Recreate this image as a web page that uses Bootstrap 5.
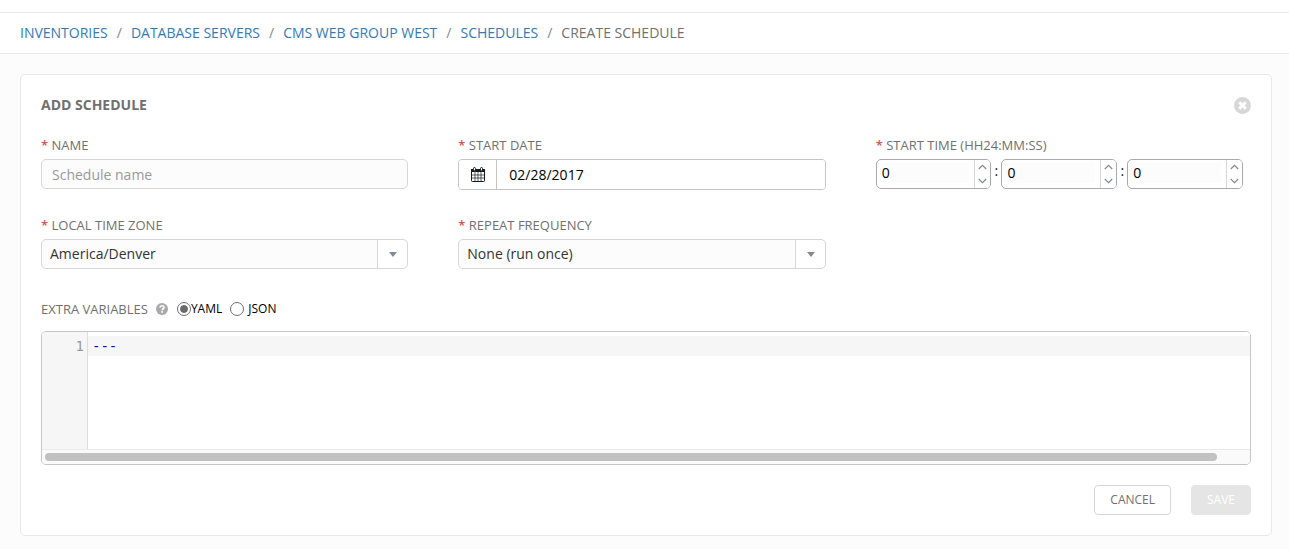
<!DOCTYPE html>
<html lang="en">
<head>
<meta charset="utf-8">
<meta name="viewport" content="width=device-width, initial-scale=1">
<title>Create Schedule</title>
<link href="https://cdn.jsdelivr.net/npm/bootstrap@5.3.0/dist/css/bootstrap.min.css" rel="stylesheet">
<style>
  body { font-family: "Open Sans", sans-serif; font-size: 14px; line-height: 20px; color: #707070; background: #fcfcfc; }
  .crumb-bar { margin-top: 12px; padding: 10px 20px; border-top: 1px solid #e8e8e8; border-bottom: 1px solid #e8e8e8; }
  .page-top { background: #fff; }
  .crumb-bar .breadcrumb { --bs-breadcrumb-item-padding-x: 9px; --bs-breadcrumb-divider-color: #848992; --bs-breadcrumb-item-active-color: #707070; --bs-breadcrumb-font-size: 14px; }
  .crumb-bar a { color: #337ab7; text-decoration: none; }
  .panel-box { margin: 20px 17px 13px 20px; padding: 20px; background: #fff; border: 1px solid #e8e8e8; border-radius: 5px; }
  .panel-head { margin-bottom: 21px; }
  .panel-title { font-size: 14px; line-height: 20px; font-weight: 700; }
  .close-btn, .help-btn { border: 0; padding: 0; background: none; display: flex; }
  .close-btn { color: #d7d7d7; }
  .help-btn { color: #a9a9a9; margin: 0 8px; }
  .fields { padding-right: 8px; }
  .fields .row { --bs-gutter-x: 50px; }
  .fields .field { height: 80px; }
  .field-label { font-size: 13px; line-height: 18px; margin-bottom: 5px; display: block; }
  .req { color: #d9534f; font-weight: 600; }
  .box { height: 30px; border: 1px solid #d7d7d7; border-radius: 5px; background-color: #fcfcfc; font-size: 14px; line-height: 20px; color: #333; }
  .name-box { padding: 4px 10px; }
  .name-box::placeholder { color: #999; }
  .date-group { height: 31px; border: 1px solid #c4c4c4; border-radius: 4px; overflow: hidden; }
  .date-group .btn { width: 38px; border: 0; border-right: 1px solid #c4c4c4; border-radius: 0; padding: 0; background: #fff; color: #161b1f; }
  .date-group input { border: 0; padding: 4px 12px; font-size: 14px; line-height: 20px; color: #000; min-width: 0; }
  .time-box { height: 30px; border: 1px solid #a9a9a9; border-radius: 5px; overflow: hidden; background: #fff; }
  .time-box input { border: 0; margin: 3px 5px 5px 1px; padding: 0 4px; background: #fcfcfc; font-size: 14px; line-height: 20px; color: #000; min-width: 0; }
  .spin { width: 16px; border-left: 1px solid #d7d7d7; }
  .spin button { flex: 1; border: 0; padding: 0; background: #fff; color: #848992; display: flex; align-items: center; justify-content: center; }
  .colon { width: 10px; flex-shrink: 0; text-align: center; color: #161b1f; line-height: 24px; }
  .pick { appearance: none; padding: 4px 8px; background-image: linear-gradient(#d7d7d7, #d7d7d7), linear-gradient(#fff, #fff); background-size: 1px 100%, 29px 100%; background-position: right 29px top, right top; background-repeat: no-repeat; }
  .pick-arrow { right: 11px; top: 13px; pointer-events: none; color: #848992; }
  .vars-row { font-size: 13px; line-height: 18px; margin-top: 4px; }
  .vars-row label { color: #000; font-size: 12px; }
  .vars-row input { appearance: none; width: 14px; height: 14px; margin: 0; padding: 1px; border: 1px solid #707070; border-radius: 50%; background: #fff; }
  .vars-row input:checked { padding: 2px; background: #6b6b6b content-box; box-shadow: inset 0 0 0 2px #fff; }
  .vars-row .help-btn { margin-right: 9px; }
  .editor { margin-top: 13px; border: 1px solid #c6c6c6; border-radius: 5px; overflow: hidden; font-family: "DejaVu Sans Mono", monospace; }
  .editor .gutter { width: 46px; padding: 4px 3px; text-align: right; color: #999; background: #f6f6f6; border-right: 1px solid #ddd; }
  .editor textarea { height: 117px; border: 0; outline: 0; resize: none; padding: 4px; font-size: 14px; line-height: 20px; color: #00f; white-space: pre; overflow: hidden; background: linear-gradient(#f6f6f6, #f6f6f6) 0 4px / 100% 20px no-repeat #fff; }
  .h-scroll { height: 15px; padding: 3px; border-top: 1px solid #e8e8e8; background: #fafafa; }
  .h-thumb { width: 97.5%; height: 8px; border-radius: 4px; background: #c1c1c1; }
  .actions { gap: 20px; margin-top: 20px; }
  .act { height: 30px; padding: 0 15px; font-size: 12px; line-height: 18px; border-radius: 4px; }
  .act-cancel { background: #fff; color: #707070; border-color: #d7d7d7; }
  .act-save:disabled { background: #e5e5e5; border-color: #e5e5e5; color: #fff; opacity: 1; }
</style>
</head>
<body>
<header class="page-top overflow-hidden">
  <nav class="crumb-bar" aria-label="breadcrumb">
    <ol class="breadcrumb mb-0">
      <li class="breadcrumb-item"><a href="#">INVENTORIES</a></li>
      <li class="breadcrumb-item"><a href="#">DATABASE SERVERS</a></li>
      <li class="breadcrumb-item"><a href="#">CMS WEB GROUP WEST</a></li>
      <li class="breadcrumb-item"><a href="#">SCHEDULES</a></li>
      <li class="breadcrumb-item active" aria-current="page">CREATE SCHEDULE</li>
    </ol>
  </nav>
</header>
<main class="panel-box">
  <form>
    <div class="panel-head d-flex justify-content-between align-items-center">
      <h1 class="panel-title mb-0">ADD SCHEDULE</h1>
      <button type="button" class="close-btn" aria-label="Close">
        <svg width="17" height="17" viewBox="0 0 17 17"><circle cx="8.5" cy="8.5" r="8.5" fill="currentColor"/><path d="M5.2 5.2l6.6 6.6M11.8 5.2l-6.6 6.6" stroke="#fff" stroke-width="3"/></svg>
      </button>
    </div>
    <div class="fields"><div class="row">
      <div class="col-4 field">
        <label class="field-label" for="name"><span class="req">*</span> NAME</label>
        <input id="name" class="box name-box w-100 d-block" type="text" placeholder="Schedule name">
      </div>
      <div class="col-4 field">
        <label class="field-label" for="date"><span class="req">*</span> START DATE</label>
        <div class="date-group d-flex">
          <button type="button" class="btn d-flex align-items-center justify-content-center" aria-label="Pick a date">
            <svg width="14" height="15" viewBox="0 0 14 15"><rect x="0.5" y="2.5" width="13" height="12" rx="0.8" fill="#fff" stroke="currentColor"/><path d="M0 2h14v3H0z" fill="currentColor"/><path d="M.5 8h13M.5 11h13M4 5v9M7 5v9M10 5v9" stroke="currentColor" stroke-width=".7"/><rect x="2.5" y=".5" width="2" height="3.4" rx="1" fill="#fff" stroke="currentColor"/><rect x="9.5" y=".5" width="2" height="3.4" rx="1" fill="#fff" stroke="currentColor"/></svg>
          </button>
          <input id="date" class="flex-fill" type="text" value="02/28/2017">
        </div>
      </div>
      <div class="col-4 field">
        <label class="field-label" for="hour"><span class="req">*</span> START TIME (HH24:MM:SS)</label>
        <div class="d-flex">
          <div class="time-box d-flex flex-fill"><input id="hour" class="flex-fill w-100" type="text" value="0">
            <div class="spin d-flex flex-column flex-shrink-0"><button type="button" aria-label="Hour up"><svg width="9" height="6" viewBox="0 0 9 6"><path d="M.8 5l3.7-3.7L8.2 5" fill="none" stroke="currentColor" stroke-width="1.2"/></svg></button><button type="button" aria-label="Hour down"><svg width="9" height="6" viewBox="0 0 9 6"><path d="M.8 1l3.7 3.7L8.2 1" fill="none" stroke="currentColor" stroke-width="1.2"/></svg></button></div></div>
          <span class="colon">:</span>
          <div class="time-box d-flex flex-fill"><input class="flex-fill w-100" type="text" value="0" aria-label="Minute">
            <div class="spin d-flex flex-column flex-shrink-0"><button type="button" aria-label="Minute up"><svg width="9" height="6" viewBox="0 0 9 6"><path d="M.8 5l3.7-3.7L8.2 5" fill="none" stroke="currentColor" stroke-width="1.2"/></svg></button><button type="button" aria-label="Minute down"><svg width="9" height="6" viewBox="0 0 9 6"><path d="M.8 1l3.7 3.7L8.2 1" fill="none" stroke="currentColor" stroke-width="1.2"/></svg></button></div></div>
          <span class="colon">:</span>
          <div class="time-box d-flex flex-fill"><input class="flex-fill w-100" type="text" value="0" aria-label="Second">
            <div class="spin d-flex flex-column flex-shrink-0"><button type="button" aria-label="Second up"><svg width="9" height="6" viewBox="0 0 9 6"><path d="M.8 5l3.7-3.7L8.2 5" fill="none" stroke="currentColor" stroke-width="1.2"/></svg></button><button type="button" aria-label="Second down"><svg width="9" height="6" viewBox="0 0 9 6"><path d="M.8 1l3.7 3.7L8.2 1" fill="none" stroke="currentColor" stroke-width="1.2"/></svg></button></div></div>
        </div>
      </div>
      <div class="col-4 field">
        <label class="field-label" for="zone"><span class="req">*</span> LOCAL TIME ZONE</label>
        <div class="position-relative">
          <select id="zone" class="box pick w-100 d-block"><option>America/Denver</option></select>
          <svg class="pick-arrow position-absolute" width="8" height="5" viewBox="0 0 8 5"><path d="M0 0h8L4 5z" fill="currentColor"/></svg>
        </div>
      </div>
      <div class="col-4 field">
        <label class="field-label" for="repeat"><span class="req">*</span> REPEAT FREQUENCY</label>
        <div class="position-relative">
          <select id="repeat" class="box pick w-100 d-block"><option>None (run once)</option></select>
          <svg class="pick-arrow position-absolute" width="8" height="5" viewBox="0 0 8 5"><path d="M0 0h8L4 5z" fill="currentColor"/></svg>
        </div>
      </div>
    </div></div>
    <div class="vars-row d-flex align-items-center">
      <span>EXTRA VARIABLES</span>
      <button type="button" class="help-btn" aria-label="Help">
        <svg width="12" height="12" viewBox="0 0 12 12"><circle cx="6" cy="6" r="6" fill="currentColor"/><path d="M4 4.6C4.1 2.3 8 2.2 8 4.4 8 5.8 6.2 5.7 6.2 7.2" fill="none" stroke="#fff" stroke-width="1.6"/><rect x="5.3" y="8.1" width="1.7" height="1.7" fill="#fff"/></svg>
      </button>
      <input type="radio" name="fmt" id="yaml" checked><label for="yaml" class="me-2">YAML</label>
      <input type="radio" name="fmt" id="json"><label for="json" class="ms-1">JSON</label>
    </div>
    <div class="editor">
      <div class="d-flex">
        <div class="gutter flex-shrink-0">1</div>
        <textarea class="flex-fill" spellcheck="false" aria-label="Extra variables">---</textarea>
      </div>
      <div class="h-scroll"><div class="h-thumb"></div></div>
    </div>
    <div class="actions d-flex justify-content-end">
      <button type="button" class="btn act act-cancel">CANCEL</button>
      <button type="submit" class="btn act act-save" disabled>SAVE</button>
    </div>
  </form>
</main>
<script src="https://cdn.jsdelivr.net/npm/bootstrap@5.3.0/dist/js/bootstrap.bundle.min.js"></script>
</body>
</html>
